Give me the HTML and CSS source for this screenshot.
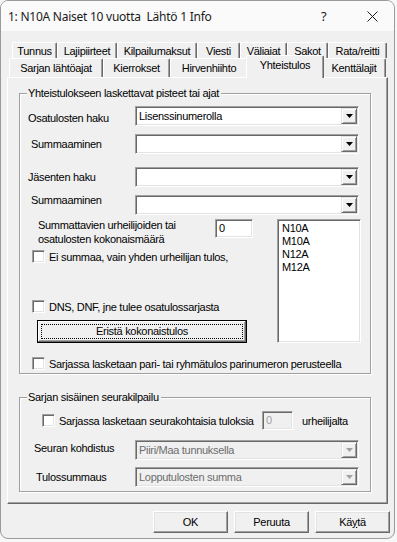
FILE: index.html
```html
<!DOCTYPE html>
<html lang="fi">
<head>
  <meta charset="UTF-8" />
  <title>1: N10A Naiset 10 vuotta Lähtö 1 Info</title>
  <link rel="stylesheet" href="styles.css">
</head>
<body>
  <div class="window">
    <div class="titlebar">
      <span class="title">1: N10A Naiset 10 vuotta&nbsp; Lähtö 1 Info</span>
      <span class="help">?</span>
      <span class="close">
        <svg width="11" height="11" viewBox="0 0 11 11"><path d="M0.5 0.5 L10.5 10.5 M10.5 0.5 L0.5 10.5" stroke="#1a1a1a" stroke-width="1"/></svg>
      </span>
    </div>

    <div class="content">
      <div class="tabs">
        <div class="tab-row back">
          <div class="tab">Tunnus</div>
          <div class="tab">Lajipiirteet</div>
          <div class="tab">Kilpailumaksut</div>
          <div class="tab">Viesti</div>
          <div class="tab">Väliajat</div>
          <div class="tab">Sakot</div>
          <div class="tab">Rata/reitti</div>
        </div>
        <div class="tab-row front">
          <div class="tab">Sarjan lähtöajat</div>
          <div class="tab">Kierrokset</div>
          <div class="tab">Hirvenhiihto</div>
          <div class="tab active">Yhteistulos</div>
          <div class="tab">Kenttälajit</div>
        </div>
      </div>

      <div class="panel">
        <fieldset class="group first">
          <legend>Yhteistulokseen laskettavat pisteet tai ajat</legend>

          <div class="row r1">
            <span class="lbl down">Osatulosten haku</span>
            <div class="combo"><span class="combo-value">Lisenssinumerolla</span><span class="combo-btn"><svg width="7" height="4" viewBox="0 0 7 4"><path d="M0 0 H7 L3.5 4 Z"/></svg></span></div>
          </div>
          <div class="row r2">
            <span class="lbl indent">Summaaminen</span>
            <div class="combo"><span class="combo-value"></span><span class="combo-btn"><svg width="7" height="4" viewBox="0 0 7 4"><path d="M0 0 H7 L3.5 4 Z"/></svg></span></div>
          </div>
          <div class="row r3">
            <span class="lbl">Jäsenten haku</span>
            <div class="combo"><span class="combo-value"></span><span class="combo-btn"><svg width="7" height="4" viewBox="0 0 7 4"><path d="M0 0 H7 L3.5 4 Z"/></svg></span></div>
          </div>
          <div class="row r4">
            <span class="lbl indent up">Summaaminen</span>
            <div class="combo"><span class="combo-value"></span><span class="combo-btn"><svg width="7" height="4" viewBox="0 0 7 4"><path d="M0 0 H7 L3.5 4 Z"/></svg></span></div>
          </div>

          <div class="lower">
            <div class="lower-left">
              <div class="count-row">
                <span class="count-text">Summattavien urheilijoiden tai<br>osatulosten kokonaismäärä</span>
                <span class="edit">0</span>
              </div>
              <div class="check cb1"><span class="box"></span>Ei summaa, vain yhden urheilijan tulos,</div>
              <div class="check cb2"><span class="box"></span>DNS, DNF, jne tulee osatulossarjasta</div>
              <button class="btn default"><span class="focus">Eristä kokonaistulos</span></button>
            </div>
            <div class="listbox">
              <div>N10A</div>
              <div>M10A</div>
              <div>N12A</div>
              <div>M12A</div>
            </div>
          </div>

          <div class="check cb3"><span class="box"></span>Sarjassa lasketaan pari- tai ryhmätulos parinumeron perusteella</div>
        </fieldset>

        <fieldset class="group second">
          <legend>Sarjan sisäinen seurakilpailu</legend>

          <div class="club-row">
            <span class="box"></span>
            <span class="club-text">Sarjassa lasketaan seurakohtaisia tuloksia</span>
            <span class="edit disabled">0</span>
            <span class="club-unit">urheilijalta</span>
          </div>
          <div class="row rb">
            <span class="lbl wide up-small">Seuran kohdistus</span>
            <div class="combo disabled"><span class="combo-value">Piiri/Maa tunnuksella</span><span class="combo-btn"><svg width="7" height="4" viewBox="0 0 7 4"><path d="M0 0 H7 L3.5 4 Z"/></svg></span></div>
          </div>
          <div class="row rc">
            <span class="lbl wider">Tulossummaus</span>
            <div class="combo disabled"><span class="combo-value">Lopputulosten summa</span><span class="combo-btn"><svg width="7" height="4" viewBox="0 0 7 4"><path d="M0 0 H7 L3.5 4 Z"/></svg></span></div>
          </div>
        </fieldset>
      </div>

      <div class="buttons">
        <button class="btn">OK</button>
        <button class="btn">Peruuta</button>
        <button class="btn">Kä<u>y</u>tä</button>
      </div>
    </div>
  </div>
</body>
</html>
```

FILE: styles.css
```css
* {
  box-sizing: border-box;
}

body {
  margin: 0;
  background: #f7f7f7;
  font-family: "Liberation Sans", Arial, sans-serif;
  font-size: 11px;
  letter-spacing: -0.3px;
  color: #000;
}

.window {
  width: 395px;
  height: 539px;
  background: #f0f0f0;
  border: 1px solid #9a9a9a;
  border-radius: 8px;
  overflow: hidden;
}

.titlebar {
  height: 30px;
  background: #fafafa;
  display: flex;
  align-items: center;
  padding-left: 7px;
}

.title {
  flex: 1;
  font-family: "Noto Sans", "Liberation Sans", sans-serif;
  font-size: 12px;
  letter-spacing: -0.25px;
  color: #1a1a1a;
}

.help {
  width: 46px;
  font-family: "Noto Sans", sans-serif;
  font-size: 13px;
  color: #1a1a1a;
}

.close {
  width: 27px;
  display: flex;
}

.content {
  padding: 11px 6px 0;
}

/* tabs */
.tab-row {
  display: flex;
}

.tab-row.back {
  height: 16px;
  margin-left: 5px;
}

.tab-row.front {
  height: 19px;
  margin-left: 2px;
}

.tab {
  border: 1px solid;
  border-color: #fff #696969 transparent #fff;
  border-bottom: none;
  border-radius: 2px 2px 0 0;
  box-shadow: inset -1px 0 #a0a0a0;
  display: flex;
  align-items: center;
  justify-content: center;
  white-space: nowrap;
}

.back .tab:nth-child(1) { width: 45px; }
.back .tab:nth-child(2) { width: 60px; }
.back .tab:nth-child(3) { width: 80px; }
.back .tab:nth-child(4) { width: 43px; }
.back .tab:nth-child(5) { width: 47px; }
.back .tab:nth-child(6) { width: 41px; }
.back .tab:nth-child(7) { width: 59px; }

.front .tab:nth-child(1) { width: 94px; }
.front .tab:nth-child(2) { width: 67px; }
.front .tab:nth-child(3) { width: 78px; }
.front .tab:nth-child(4) { width: 78px; }
.front .tab:nth-child(5) { width: 64px; }

.tab.active {
  margin: -3px -2px 0;
  height: 23px;
  padding-bottom: 4px;
  background: #f0f0f0;
  position: relative;
  z-index: 1;
}

/* panel */
.panel {
  height: 427px;
  border: 1px solid;
  border-color: #fff #696969 #696969 #fff;
  box-shadow: inset -1px -1px #a0a0a0;
  padding-top: 0;
}

.group {
  margin: 0 0 0 11px;
  padding: 0;
  width: 352px;
  min-width: 0;
  border: 1px solid #a0a0a0;
  box-shadow: 1px 1px 0 #fff, inset 1px 1px 0 #fff;
}

.group legend {
  margin-left: 7px;
  padding: 0 2px 0 1px;
  line-height: 13px;
  background: #f0f0f0;
}

.group.first {
  margin-top: 9px;
  padding-bottom: 3px;
}

.group.second {
  margin-top: 17px;
  padding-bottom: 4px;
}

.row {
  display: flex;
  align-items: center;
  height: 20px;
}

.r1 { margin-top: 6px; }
.r2 { margin-top: 8px; }
.r3 { margin-top: 13px; }
.r4 { margin-top: 8px; }
.rb { margin-top: 10px; }
.rc { margin-top: 7px; }

.lbl {
  width: 115px;
  padding-left: 8px;
  white-space: nowrap;
}

.lbl.indent { padding-left: 11px; }
.lbl.wide { padding-left: 14px; }
.lbl.wider { padding-left: 16px; }
.lbl.down { margin-top: 4px; }
.lbl.up { margin-top: -10px; }
.lbl.up-small { margin-top: -5px; }

/* combo box */
.combo {
  width: 224px;
  height: 20px;
  display: flex;
  background: #fff;
  border: 1px solid;
  border-color: #a0a0a0 #fff #fff #a0a0a0;
  box-shadow: inset 1px 1px #696969, inset -1px -1px #e3e3e3;
  padding: 1px;
}

.combo-value {
  flex: 1;
  padding-left: 2px;
  line-height: 16px;
}

.combo-btn {
  width: 16px;
  height: 16px;
  background: #f0f0f0;
  border: 1px solid;
  border-color: #e3e3e3 #696969 #696969 #e3e3e3;
  box-shadow: inset 1px 1px #fff, inset -1px -1px #a0a0a0;
  display: flex;
  align-items: center;
  justify-content: center;
}

.combo-btn svg {
  fill: #000;
}

.combo.disabled {
  background: #f0f0f0;
  color: #6d6d6d;
}

.combo.disabled .combo-btn svg {
  fill: #a0a0a0;
}

/* lower part of first group */
.lower {
  display: flex;
  margin-top: 4px;
}

.lower-left {
  width: 257px;
  display: flex;
  flex-direction: column;
  align-items: flex-start;
}

.count-row {
  display: flex;
  height: 27px;
}

.count-text {
  width: 195px;
  padding-left: 18px;
  margin-top: -1px;
  line-height: 14px;
}

.edit {
  width: 38px;
  height: 19px;
  background: #fff;
  border: 1px solid;
  border-color: #a0a0a0 #fff #fff #a0a0a0;
  box-shadow: inset 1px 1px #696969, inset -1px -1px #e3e3e3;
  padding: 2px 0 0 3px;
  line-height: 13px;
}

.edit.disabled {
  width: 31px;
  background: #f0f0f0;
  color: #a0a0a0;
}

.check {
  display: flex;
  align-items: center;
  height: 13px;
  padding-left: 12px;
  white-space: nowrap;
}

.box {
  width: 13px;
  height: 13px;
  flex: none;
  background: #fff;
  border: 1px solid;
  border-color: #a0a0a0 #fff #fff #a0a0a0;
  box-shadow: inset 1px 1px #696969, inset -1px -1px #e3e3e3;
}

.check .box {
  margin-right: 4px;
}

.cb1 { margin-top: 4px; }
.cb2 { margin-top: 37px; }
.cb3 { margin-top: 14px; }

.listbox {
  width: 84px;
  height: 124px;
  background: #fff;
  border: 1px solid;
  border-color: #a0a0a0 #fff #fff #a0a0a0;
  box-shadow: inset 1px 1px #696969, inset -1px -1px #e3e3e3;
  padding: 2px 0 0 4px;
  line-height: 13px;
}

/* second group */
.club-row {
  display: flex;
  align-items: center;
  height: 19px;
  margin-top: 7px;
  padding-left: 22px;
  white-space: nowrap;
}

.club-text {
  width: 207px;
  padding-left: 4px;
}

.club-unit {
  margin-left: 9px;
}

/* buttons */
.btn {
  font: inherit;
  letter-spacing: inherit;
  color: #000;
  background: #f0f0f0;
  border: 1px solid;
  border-color: #fff #696969 #696969 #fff;
  box-shadow: inset -1px -1px #a0a0a0, inset 1px 1px #e3e3e3;
  padding: 0;
  height: 22px;
  width: 75px;
}

.btn.default {
  width: 210px;
  height: 23px;
  margin: 7px 0 0 17px;
  border: 1px solid #000;
  box-shadow: inset -1px -1px #696969, inset 1px 1px #fff, inset -2px -2px #a0a0a0;
  padding: 3px;
}

.focus {
  display: block;
  height: 15px;
  line-height: 13px;
  border: 1px dotted #000;
}

.buttons {
  display: flex;
  justify-content: flex-end;
  gap: 6px;
  margin: 7px -2px 0 0;
}
```
